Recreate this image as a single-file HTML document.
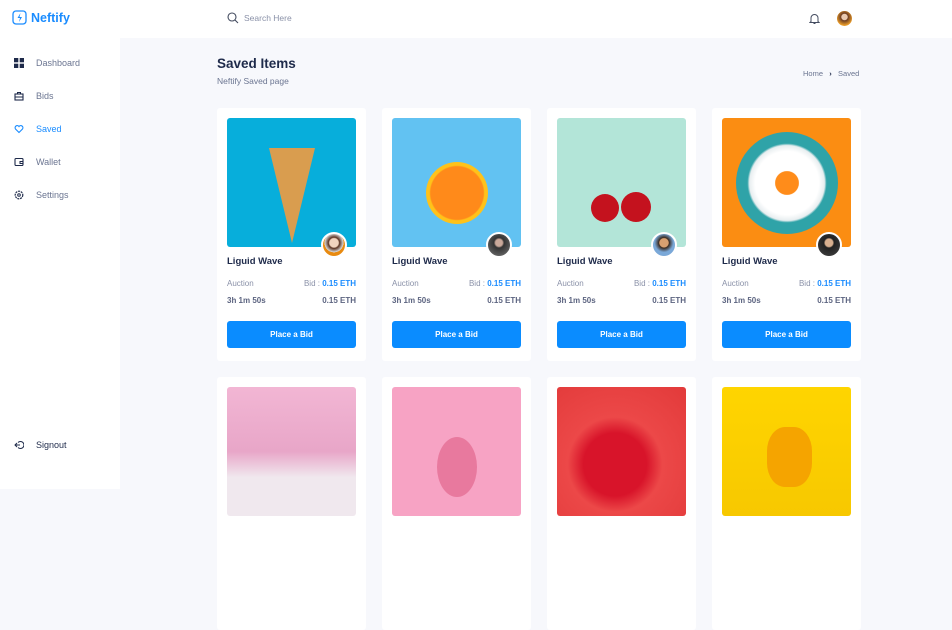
<!DOCTYPE html><html style="background:#f7f8fc"><head><style>
*{margin:0;padding:0;box-sizing:border-box}
body{width:952px;height:489px;overflow:hidden;background:#f7f8fc;font-family:"Liberation Sans",sans-serif;position:relative}
.side{position:absolute;left:0;top:0;width:120px;height:489px;background:#fff}
.logo{position:absolute;left:12px;top:10px;display:flex;align-items:center;color:#1a8cff;font-weight:bold;font-size:12.5px}
.nav{position:absolute;left:14px;font-size:9px;color:#6b7591;display:flex;align-items:center}
.nav svg{width:10px;height:10px;margin-right:12px}
.top{position:absolute;left:120px;top:0;right:0;height:38px;background:#fff}
.card{position:absolute;width:149px;height:253px;background:#fff;border-radius:3px}
.img{position:absolute;left:10px;top:10px;width:129px;height:129px;border-radius:3px;overflow:hidden}
.av{position:absolute;left:104px;top:124px;width:26px;height:26px;border-radius:50%;border:2px solid #fff}
.t{position:absolute;left:10px;top:148px;font-size:9.5px;font-weight:bold;color:#1e2a4a}
.r{position:absolute;left:10px;right:10px;font-size:8px;color:#8a91a8;display:flex;justify-content:space-between}
.b{color:#1a8cff;font-weight:bold}
.btn{position:absolute;left:10px;top:213px;width:129px;height:27px;background:#0a8cff;border-radius:3px;color:#fff;font-size:8px;font-weight:bold;text-align:center;line-height:27px}
</style></head><body>
<div class="side">
<div class="logo"><svg width="15" height="15" viewBox="0 0 15 15"><rect x="1" y="1" width="13" height="13" rx="3" fill="none" stroke="#1a8cff" stroke-width="1.3"/><path d="M8.5 3L5.5 8h2.5l-1 4 3-5H7.5z" fill="#1a8cff"/></svg><span style="margin-left:4px">Neftify</span></div>
<div class="nav" style="top:58px"><svg viewBox="0 0 10 10"><rect x="0" y="0" width="4.3" height="4.3" fill="#1e2a4a"/><rect x="5.7" y="0" width="4.3" height="4.3" fill="#1e2a4a"/><rect x="0" y="5.7" width="4.3" height="4.3" fill="#1e2a4a"/><rect x="5.7" y="5.7" width="4.3" height="4.3" fill="#1e2a4a"/></svg>Dashboard</div>
<div class="nav" style="top:91px"><svg viewBox="0 0 10 10"><rect x="1" y="3" width="8" height="6" fill="none" stroke="#1e2a4a" stroke-width="1.1"/><path d="M3.5 3V1.5h3V3M1 6h8" stroke="#1e2a4a" fill="none" stroke-width="1"/></svg>Bids</div>
<div class="nav" style="top:124px;color:#1a8cff"><svg viewBox="0 0 10 10"><path d="M5 8.5L1.5 5A2 2 0 0 1 5 2.5 2 2 0 0 1 8.5 5z" fill="none" stroke="#1a8cff" stroke-width="1.1"/></svg>Saved</div>
<div class="nav" style="top:157px"><svg viewBox="0 0 10 10"><rect x="1" y="1.5" width="8" height="7" rx="1" fill="none" stroke="#1e2a4a" stroke-width="1.1"/><path d="M6 4.5h3v2H6z" fill="none" stroke="#1e2a4a"/></svg>Wallet</div>
<div class="nav" style="top:190px"><svg viewBox="0 0 10 10"><circle cx="5" cy="5" r="3.8" fill="none" stroke="#1e2a4a" stroke-width="1.2" stroke-dasharray="2 0.8"/><circle cx="5" cy="5" r="1.3" fill="none" stroke="#1e2a4a"/></svg>Settings</div>
<div class="nav" style="top:440px;color:#1e2a4a"><svg viewBox="0 0 10 10"><path d="M4 2.5A3.5 3.5 0 1 1 4 7.5M1 5h5M3 3L1 5l2 2" fill="none" stroke="#1e2a4a" stroke-width="1"/></svg>Signout</div>
</div>
<div class="top">
<svg style="position:absolute;left:107px;top:12px" width="12" height="12" viewBox="0 0 12 12"><circle cx="5" cy="5" r="4" fill="none" stroke="#444c60" stroke-width="1.1"/><path d="M8 8l3 3" stroke="#444c60" stroke-width="1.1"/></svg>
<div style="position:absolute;left:124px;top:13px;font-size:8.5px;color:#8a91a8">Search Here</div>
<svg style="position:absolute;left:689px;top:13px" width="11" height="12" viewBox="0 0 11 12"><path d="M2 8.5V5a3.5 3.5 0 0 1 7 0v3.5l1 1H1z M4.5 10.5h2" fill="none" stroke="#444c60" stroke-width="1"/></svg>
<div style="position:absolute;left:717px;top:11px;width:15px;height:15px;border-radius:50%;background:radial-gradient(circle at 50% 40%,#e9c9b0 25%,#6b3b22 30%,#e89b2a 70%)"></div>
</div>
<div style="position:absolute;left:217px;top:56px;font-size:13.5px;font-weight:bold;color:#1e2a4a">Saved Items</div>
<div style="position:absolute;left:217px;top:76px;font-size:8.5px;color:#6b7591">Neftify Saved page</div>
<div style="position:absolute;left:803px;top:69px;font-size:7.5px;color:#6b7591">Home &nbsp;&nbsp;<b style="color:#1e2a4a">›</b>&nbsp;&nbsp; Saved</div>

<div class="card" style="left:217px;top:108px"><div class="img" style="background:#07aedb"><div style="position:absolute;left:42px;top:30px;width:0;height:0;border-left:23px solid transparent;border-right:23px solid transparent;border-top:95px solid #d99d4f"></div></div><div class="av" style="background:radial-gradient(circle at 50% 40%,#f0d3bf 25%,#5a3222 32%,#ddd 55%,#e88a10 56%)"></div><div class="t">Liguid Wave</div><div class="r" style="top:171px"><span>Auction</span><span>Bid : <span class="b">0.15 ETH</span></span></div><div class="r" style="top:188px;color:#5c6480;font-weight:bold"><span>3h 1m 50s</span><span>0.15 ETH</span></div><div class="btn">Place a Bid</div></div>
<div class="card" style="left:382px;top:108px"><div class="img" style="background:#62c2f2"><div style="position:absolute;left:34px;top:44px;width:62px;height:62px;border-radius:50%;background:radial-gradient(#ff8a1a 60%,#ffc21a 63%)"></div></div><div class="av" style="background:radial-gradient(circle at 50% 40%,#c9a89a 20%,#333 30%,#777)"></div><div class="t">Liguid Wave</div><div class="r" style="top:171px"><span>Auction</span><span>Bid : <span class="b">0.15 ETH</span></span></div><div class="r" style="top:188px;color:#5c6480;font-weight:bold"><span>3h 1m 50s</span><span>0.15 ETH</span></div><div class="btn">Place a Bid</div></div>
<div class="card" style="left:547px;top:108px"><div class="img" style="background:#b3e5d8"><div style="position:absolute;left:34px;top:76px;width:28px;height:28px;border-radius:50%;background:#c4121e"></div><div style="position:absolute;left:64px;top:74px;width:30px;height:30px;border-radius:50%;background:#c4121e"></div></div><div class="av" style="background:radial-gradient(circle at 50% 40%,#d9a070 25%,#3a2a20 30%,#7aa8d8 55%)"></div><div class="t">Liguid Wave</div><div class="r" style="top:171px"><span>Auction</span><span>Bid : <span class="b">0.15 ETH</span></span></div><div class="r" style="top:188px;color:#5c6480;font-weight:bold"><span>3h 1m 50s</span><span>0.15 ETH</span></div><div class="btn">Place a Bid</div></div>
<div class="card" style="left:712px;top:108px"><div class="img" style="background:#fb8d12"><div style="position:absolute;left:14px;top:14px;width:102px;height:102px;border-radius:50%;background:radial-gradient(#ff8c1a 16%,#fff 17%,#fff 44%,#e8eef0 52%,#2fa3a8 55%)"></div></div><div class="av" style="background:radial-gradient(circle at 50% 40%,#d8b090 22%,#222 30%,#444)"></div><div class="t">Liguid Wave</div><div class="r" style="top:171px"><span>Auction</span><span>Bid : <span class="b">0.15 ETH</span></span></div><div class="r" style="top:188px;color:#5c6480;font-weight:bold"><span>3h 1m 50s</span><span>0.15 ETH</span></div><div class="btn">Place a Bid</div></div>

<div class="card" style="left:217px;top:377px"><div class="img" style="background:linear-gradient(#f2b6d4,#e8a6c8 50%,#f0e8ee 70%)"></div></div>
<div class="card" style="left:382px;top:377px"><div class="img" style="background:#f7a3c4"><div style="position:absolute;left:45px;top:50px;width:40px;height:60px;border-radius:50%;background:#e8799e"></div></div></div>
<div class="card" style="left:547px;top:377px"><div class="img" style="background:radial-gradient(circle at 45% 60%,#d8142a 30%,#ec4848 45%,#e23a3a)"></div></div>
<div class="card" style="left:712px;top:377px"><div class="img" style="background:linear-gradient(#ffd500,#f7c800)"><div style="position:absolute;left:45px;top:40px;width:45px;height:60px;border-radius:40%;background:#f5a400"></div></div></div>
</body></html>
